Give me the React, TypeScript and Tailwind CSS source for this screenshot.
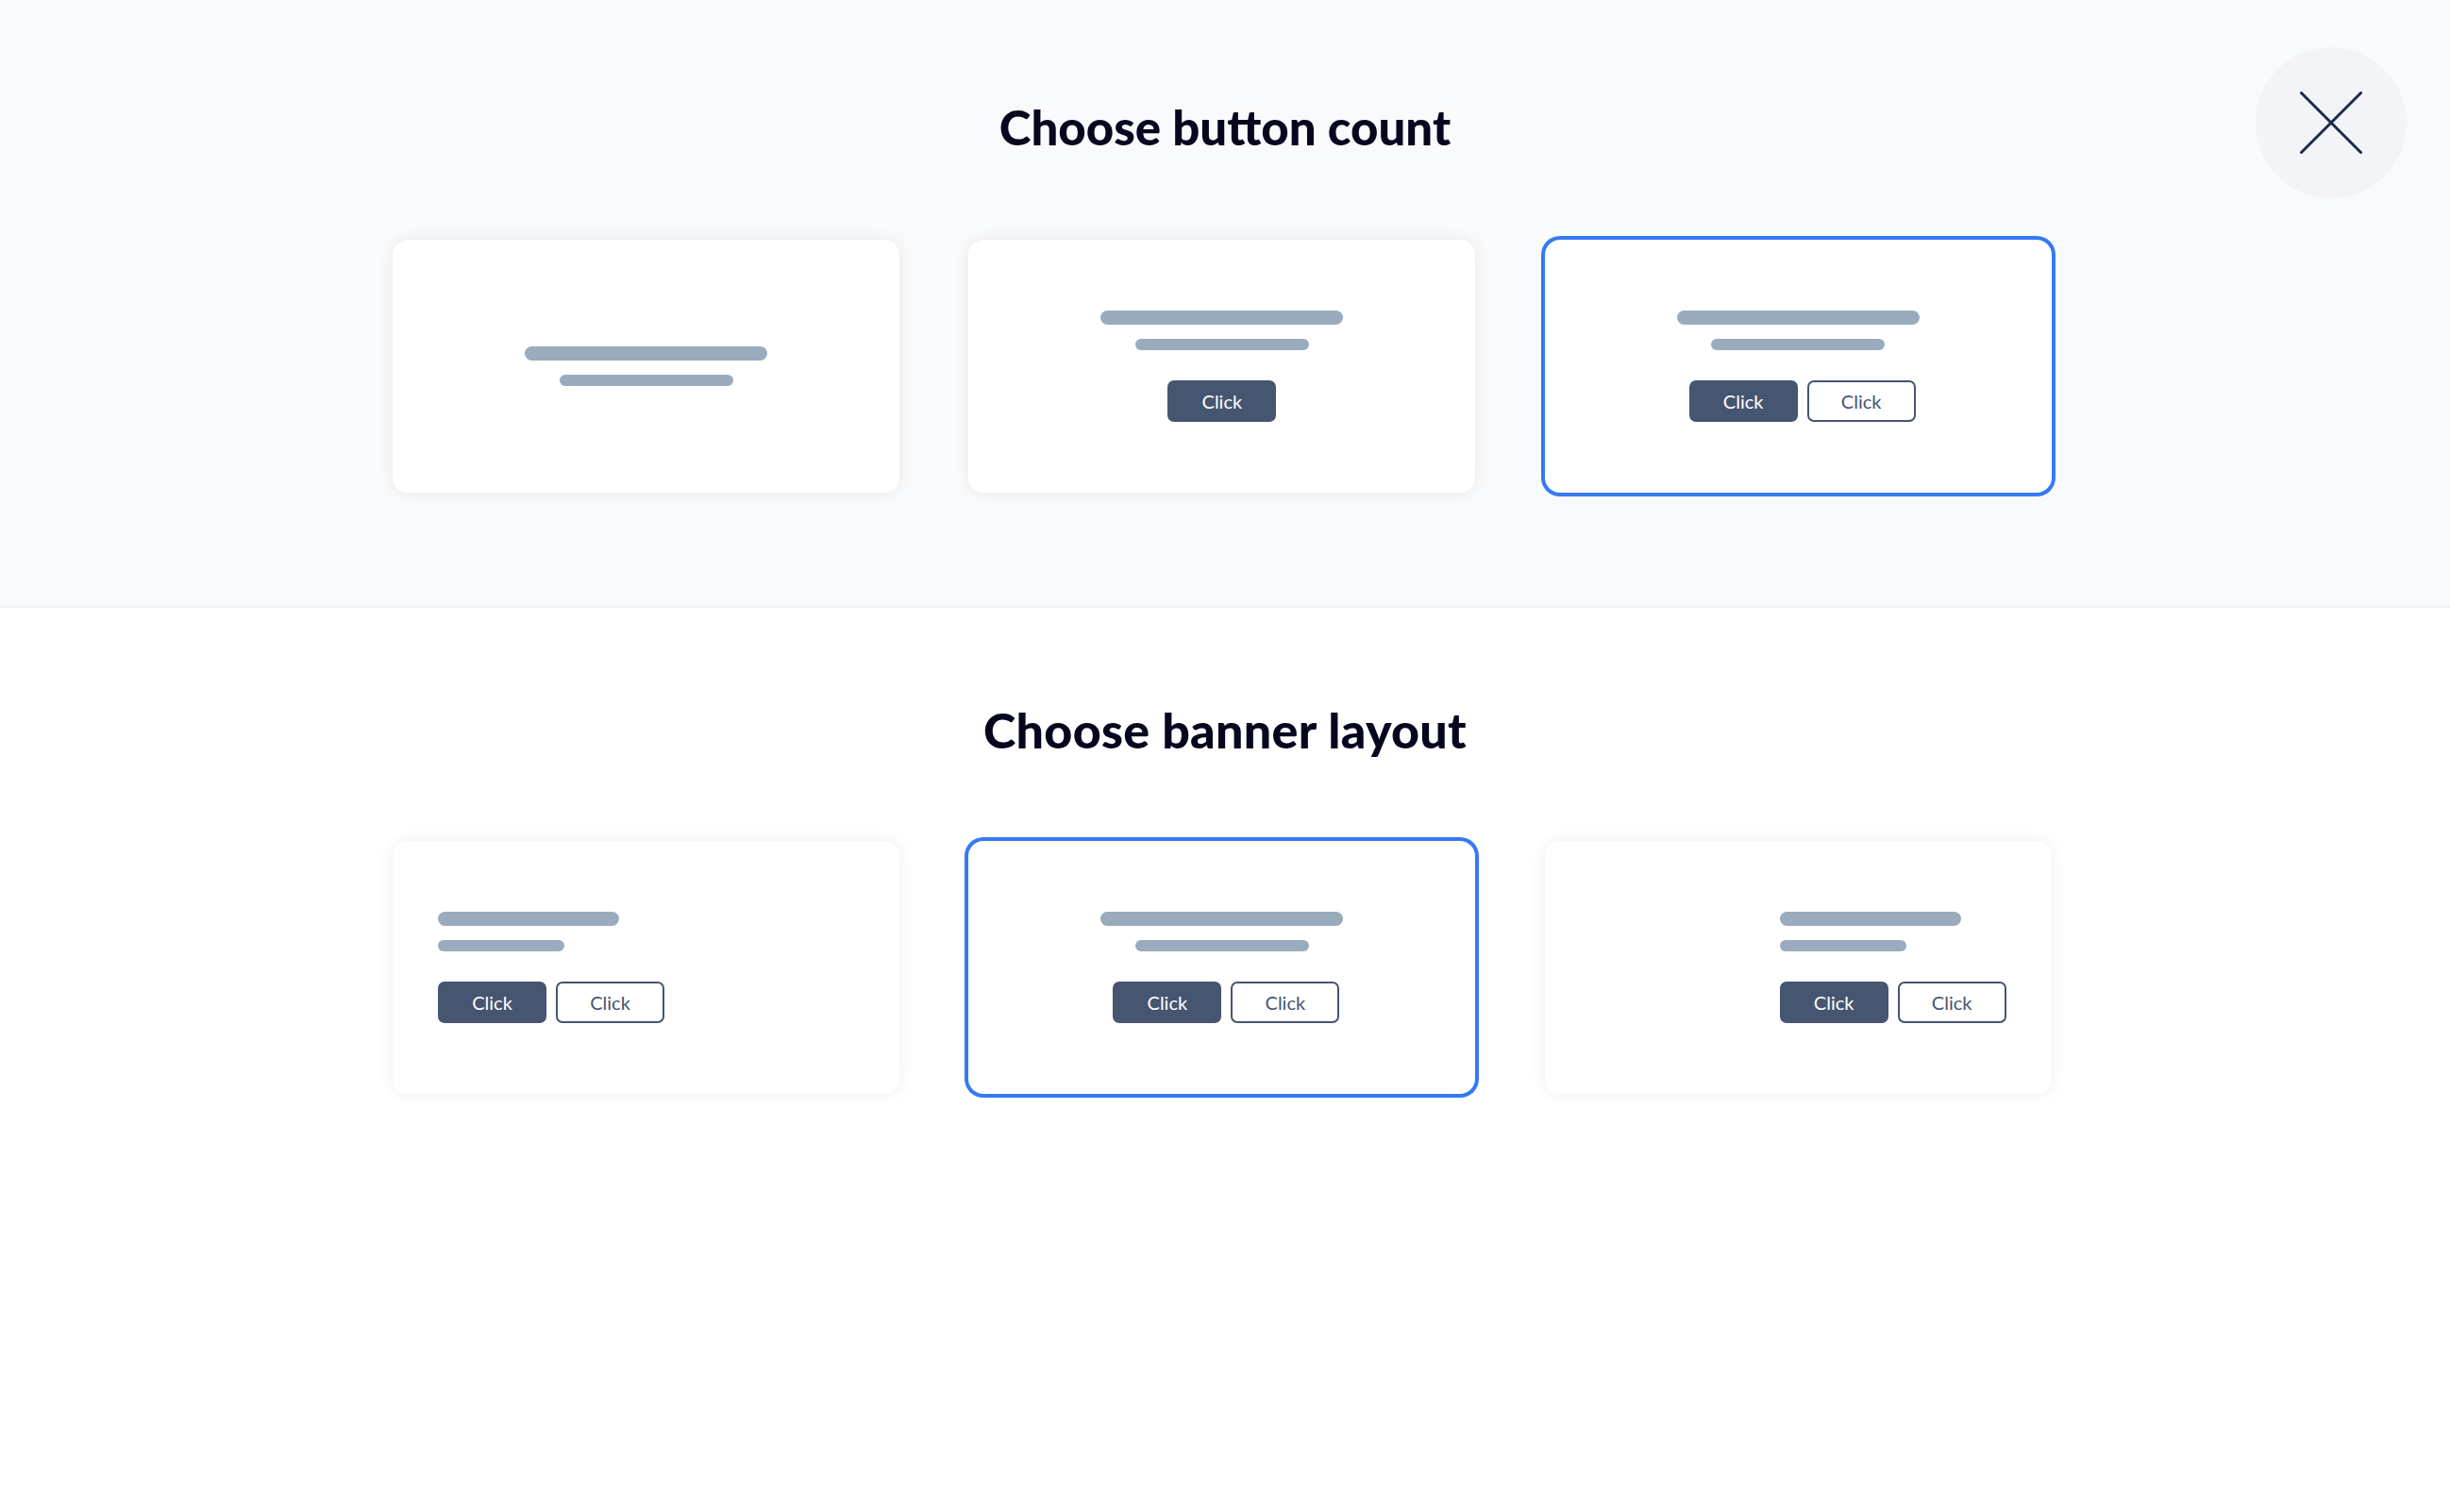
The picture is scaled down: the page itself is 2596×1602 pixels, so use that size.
import React from "react";

// Selector de variantes de banner: cantidad de botones + alineación.

type Align = "left" | "center" | "right";

const FONT = { fontFamily: "Lato, 'Noto Sans', sans-serif" };

function Bars({ narrow }: { narrow?: boolean }) {
  return (
    <div className={narrow ? "flex flex-col items-start" : "flex flex-col items-center"}>
      <div className={narrow ? "h-[15px] w-[192px] rounded-full bg-[#9aabbe]" : "h-[15px] w-[257px] rounded-full bg-[#9aabbe]"} />
      <div className={narrow ? "mt-[15px] h-[12px] w-[134px] rounded-full bg-[#9aabbe]" : "mt-[15px] h-[12px] w-[184px] rounded-full bg-[#9aabbe]"} />
    </div>
  );
}

function Buttons({ count, centered }: { count: number; centered?: boolean }) {
  if (count === 0) return null;
  return (
    <div className={centered && count > 1 ? "mt-[32px] flex gap-[10px] pl-[9px]" : "mt-[32px] flex gap-[10px]"}>
      <button
        type="button"
        className="flex h-[44px] w-[115px] items-center justify-center rounded-[7px] bg-[#465570] text-[20px] text-white"
      >
        Click
      </button>
      {count > 1 && (
        <button
          type="button"
          className="flex h-[44px] w-[115px] items-center justify-center rounded-[7px] border-2 border-[#465570] bg-white text-[20px] text-[#465570]"
        >
          Click
        </button>
      )}
    </div>
  );
}

function Card({
  selected,
  children,
  align = "center",
}: {
  selected?: boolean;
  children: React.ReactNode;
  align?: Align;
}) {
  const justify =
    align === "left" ? "justify-start" : align === "right" ? "justify-end" : "justify-center";
  return (
    <div
      className={
        "flex h-[268px] w-[537px] items-center rounded-[16px] bg-white px-[48px] " +
        justify +
        (selected
          ? " ring-4 ring-[#3679f5]"
          : " shadow-[0_0_18px_rgba(15,23,42,0.07)]")
      }
    >
      {children}
    </div>
  );
}

function Section({
  title,
  children,
  tone,
}: {
  title: string;
  children: React.ReactNode;
  tone: "gray" | "white";
}) {
  return (
    <section
      className={
        tone === "gray"
          ? "border-b-2 border-[#eef0f3] bg-[#f9fafb] pt-[105px] pb-[120px]"
          : "bg-white pt-[99px] pb-[120px]"
      }
    >
      <h2
        className={
          tone === "gray"
            ? "text-center text-[51px] leading-[60px] font-black text-[#06061f]"
            : "text-center text-[52px] leading-[60px] font-black tracking-[0.3px] text-[#06061f]"
        }
      >
        {title}
      </h2>
      <div
        className={
          tone === "gray"
            ? "ml-[416px] mt-[89px] grid w-[1758px] grid-cols-3 gap-[73px]"
            : "ml-[416px] mt-[88px] grid w-[1758px] grid-cols-3 gap-[73px]"
        }
      >
        {children}
      </div>
    </section>
  );
}

export default function App() {
  return (
    <div className="relative min-h-[1602px] w-full bg-white" style={FONT}>
      <Section title="Choose button count" tone="gray">
        <Card>
          <div className="flex flex-col items-center">
            <Bars />
            <Buttons count={0} centered />
          </div>
        </Card>
        <Card>
          <div className="flex flex-col items-center">
            <Bars />
            <Buttons count={1} centered />
          </div>
        </Card>
        <Card selected>
          <div className="flex flex-col items-center">
            <Bars />
            <Buttons count={2} centered />
          </div>
        </Card>
      </Section>

      <Section title="Choose banner layout" tone="white">
        <Card align="left">
          <div className="flex w-[240px] flex-col items-start">
            <Bars narrow />
            <Buttons count={2} />
          </div>
        </Card>
        <Card selected>
          <div className="flex flex-col items-center">
            <Bars />
            <Buttons count={2} centered />
          </div>
        </Card>
        <Card align="right">
          <div className="flex w-[240px] flex-col items-start">
            <Bars narrow />
            <Buttons count={2} />
          </div>
        </Card>
      </Section>

      <button
        type="button"
        aria-label="Close"
        className="absolute top-[50px] right-[46px] flex h-[160px] w-[160px] items-center justify-center rounded-full bg-[#f2f4f7]"
      >
        <svg width="66" height="66" viewBox="0 0 66 66" fill="none">
          <path d="M1.5 1.5L64.5 64.5M64.5 1.5L1.5 64.5" stroke="#1b2a4a" strokeWidth="3" strokeLinecap="round" />
        </svg>
      </button>
    </div>
  );
}
